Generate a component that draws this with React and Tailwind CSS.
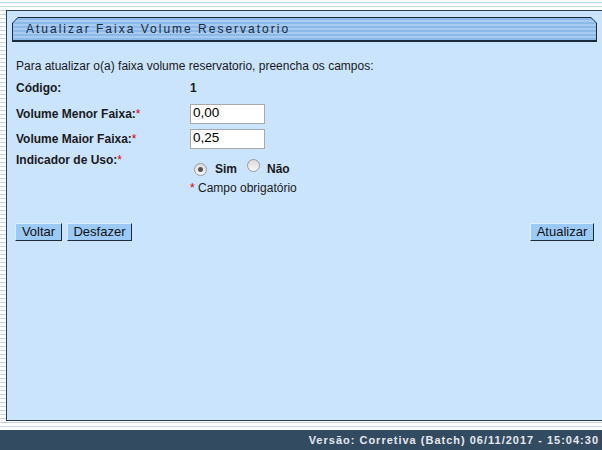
export default function App() {
  const Radio = ({ checked }) => (
    <span className="inline-flex items-center justify-center w-[13px] h-[13px] rounded-full border border-[#9a9a9a] bg-[linear-gradient(to_bottom,#dcdcdc,#f6f6f6)]">
      {checked && <span className="w-[5px] h-[5px] rounded-full bg-[#555555]" />}
    </span>
  );
  const Star = () => <span className="text-[#e00000] font-normal">*</span>;
  return (
    <div className="w-[602px] h-[450px] overflow-hidden flex flex-col font-['Liberation_Sans',Arial,sans-serif] bg-[image:repeating-linear-gradient(to_bottom,#ffffff_0px,#ffffff_2px,#c3d9e7_2px,#c3d9e7_3px,#ffffff_3px,#ffffff_4px)]">
      <div className="h-[430px] pt-[10px] pl-[6px]">
        <div className="w-[596px] h-[411px] bg-[#cae4fd] border-l border-t border-b border-[#2d3e50] flex flex-col">
          <div className="mt-[6px] ml-[5px] w-[585px] h-[25px] bg-[#1c2b3c] p-[1px] pb-[2px] [clip-path:polygon(6px_0,calc(100%_-_6px)_0,100%_6px,100%_100%,0_100%,0_6px)]">
            <div className="w-full h-full flex items-center pl-[13px] text-[12px] tracking-[2px] text-[#1b2a3a] bg-[image:repeating-linear-gradient(to_bottom,#8db9e8_0px,#8db9e8_2px,#a8ccf1_2px,#a8ccf1_4px)] [clip-path:polygon(5px_0,calc(100%_-_5px)_0,100%_5px,100%_100%,0_100%,0_5px)]">
              Atualizar Faixa Volume Reservatorio
            </div>
          </div>

          <div className="mt-[15px] pl-[9px] text-[12px] text-[#1a1a1a]">
            <div className="h-[18px] flex items-center">
              Para atualizar o(a) faixa volume reservatorio, preencha os campos:
            </div>
            <div className="h-[26px] flex items-center font-bold">
              <div className="w-[174px]">Código:</div>
              <div>1</div>
            </div>
            <div className="h-[25px] flex items-center">
              <div className="w-[174px] font-bold">Volume Menor Faixa:<Star /></div>
              <div className="w-[75px] h-[20px] bg-white border border-[#a9a9a9] flex items-center pl-[2px] text-[13.5px] text-black">0,00</div>
            </div>
            <div className="h-[25px] flex items-center">
              <div className="w-[174px] font-bold">Volume Maior Faixa:<Star /></div>
              <div className="w-[75px] h-[20px] bg-white border border-[#a9a9a9] flex items-center pl-[2px] text-[13.5px] text-black">0,25</div>
            </div>
            <div className="h-[28px] flex items-start">
              <div className="w-[174px] font-bold pt-[2px] leading-[14px]">Indicador de Uso:<Star /></div>
              <div className="flex items-center pt-[6px] font-bold">
                <span className="ml-[4px]"><Radio checked /></span>
                <span className="ml-[8px] mt-[3px]">Sim</span>
                <span className="ml-[10px]"><Radio /></span>
                <span className="ml-[7px] mt-[3px]">Não</span>
              </div>
            </div>
            <div className="h-[18px] flex items-center">
              <div className="w-[174px]" />
              <div><Star /> Campo obrigatório</div>
            </div>
          </div>

          <div className="mt-[26px] px-[8px] flex justify-between text-[13px] text-[#111111]">
            <div className="flex gap-[5px]">
              <div className="w-[47px] h-[18px] flex items-center justify-center bg-[#9ccaf6] border border-t-[#dbeeff] border-l-[#dbeeff] border-r-[#1c2a3a] border-b-[#1c2a3a]">Voltar</div>
              <div className="w-[65px] h-[18px] flex items-center justify-center bg-[#9ccaf6] border border-t-[#dbeeff] border-l-[#dbeeff] border-r-[#1c2a3a] border-b-[#1c2a3a]">Desfazer</div>
            </div>
            <div className="w-[64px] h-[18px] flex items-center justify-center bg-[#9ccaf6] border border-t-[#dbeeff] border-l-[#dbeeff] border-r-[#1c2a3a] border-b-[#1c2a3a]">Atualizar</div>
          </div>
        </div>
      </div>
      <div className="h-[20px] bg-[#334b61] flex items-center justify-end pr-[3px] text-[11px] font-bold tracking-[1px] text-[#e4e9ef]">
        Versão: Corretiva (Batch) 06/11/2017 - 15:04:30
      </div>
    </div>
  );
}
